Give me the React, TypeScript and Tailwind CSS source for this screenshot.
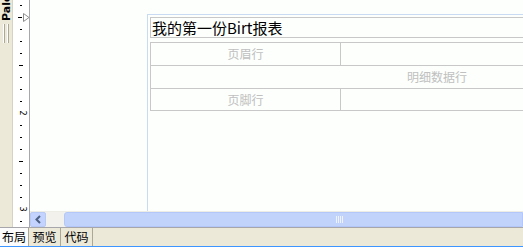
import React from "react";

const ticks = Array.from({ length: 19 }, (_, i) => 5 + i * 12);

function Ruler() {
  return (
    <div className="relative w-[18px] h-full bg-white border-l border-[#d6d3c6] border-r border-r-[#a7a6aa] overflow-hidden">
      {ticks.map((y) => {
        const k = (y - 17) / 12;
        if (k === 0) return null;
        if (k === 8 || k === 16) {
          return (
            <span
              key={y}
              className="absolute left-[4px] w-[10px] text-center text-[8px] leading-[8px] text-black rotate-90 font-['DejaVu_Sans',sans-serif]"
              style={{ top: y - 4 }}
            >
              {k === 8 ? "2" : "3"}
            </span>
          );
        }
        const long = k === 4 || k === 12;
        return (
          <span
            key={y}
            className={long ? "absolute left-[6px] w-[4px] h-px bg-black" : "absolute left-[7px] w-[2px] h-px bg-black"}
            style={{ top: y }}
          />
        );
      })}
      <svg className="absolute left-[5px] top-[13px]" width="12" height="9" viewBox="0 0 12 9">
        <line x1="0" y1="4.5" x2="4" y2="4.5" stroke="#000" />
        <path d="M5.5 0.5 L5.5 8.5 L11 4.5 Z" fill="#fff" stroke="#8e8e8e" />
      </svg>
    </div>
  );
}

export default function App() {
  return (
    <div className="w-[523px] h-[247px] flex flex-col bg-[#ece9d8] overflow-hidden font-['Noto_Sans_CJK_SC',sans-serif]">
      <div className="flex h-[227px]">
        {/* Palette strip */}
        <div className="w-[12px] flex flex-col items-center bg-[#ece9d8]">
          <div className="h-[21px] overflow-hidden [writing-mode:vertical-rl] rotate-180 text-[11px] leading-[11px] font-bold text-black font-['DejaVu_Sans',sans-serif] pr-[1px]">
            Palette
          </div>
          <div className="flex gap-[2px] mt-[3px]">
            <div className="w-[2px] h-[19px] border-l border-white border-r border-r-[#aca899]" />
            <div className="w-[2px] h-[19px] border-l border-white border-r border-r-[#aca899]" />
          </div>
        </div>

        <Ruler />

        {/* Canvas */}
        <div className="flex-1 flex flex-col min-w-0">
          <div className="flex-1 bg-[#fcfffc] overflow-hidden pt-[14px] pl-[117px]">
            <div className="h-full border-t border-l border-[#c9daf3] w-[600px] pt-[2px] pl-[2px]">
              <div className="h-[21px] w-[600px] border border-[#c8c8c8] flex items-center pl-[1px] text-[15px] leading-[19px] text-black">
                我的第一份Birt报表
              </div>
              <div className="mt-[4px] w-[574px] border border-[#c8c8c8] text-[12px] text-[#c0c0c0]">
                <div className="flex h-[22px]">
                  <div className="w-[190px] border-r border-[#c8c8c8] flex items-center justify-center">页眉行</div>
                  <div className="flex-1" />
                </div>
                <div className="h-[23px] border-t border-[#c8c8c8] flex items-center justify-center">明细数据行</div>
                <div className="flex h-[22px] border-t border-[#c8c8c8]">
                  <div className="w-[190px] border-r border-[#c8c8c8] flex items-center justify-center">页脚行</div>
                  <div className="flex-1" />
                </div>
              </div>
            </div>
          </div>

          {/* Horizontal scrollbar */}
          <div className="h-[16px] flex bg-[#f3f1ec] border-t border-[#eeede5]">
            <div className="w-[16px] h-full rounded-[2px] bg-[#c3d3fd] border border-[#b7c9f5] flex items-center justify-center">
              <svg width="8" height="9" viewBox="0 0 8 9">
                <path d="M6 1 L2.5 4.5 L6 8" fill="none" stroke="#4d6185" strokeWidth="2" />
              </svg>
            </div>
            <div className="w-[18px]" />
            <div className="flex-1 h-full rounded-l-[3px] bg-[#c1d3fb] border border-[#b3c8f8] flex items-center pl-[271px]">
              <div className="flex gap-[1px]">
                <span className="w-px h-[7px] bg-[#eef3ff]" />
                <span className="w-px h-[7px] bg-[#eef3ff]" />
                <span className="w-px h-[7px] bg-[#eef3ff]" />
                <span className="w-px h-[7px] bg-[#eef3ff]" />
              </div>
            </div>
          </div>
        </div>
      </div>

      {/* Tabs */}
      <div className="h-[19px] flex border-t border-[#a7a6aa] text-[12px] leading-[17px] text-black">
        <div className="w-[29px] bg-[#fcfcfc] border-r border-[#aca899] text-center">布局</div>
        <div className="w-[32px] border-r border-[#aca899] text-center">预览</div>
        <div className="w-[32px] border-r border-[#aca899] text-center">代码</div>
      </div>
      <div className="h-px bg-[#3d95ff]" />
    </div>
  );
}
